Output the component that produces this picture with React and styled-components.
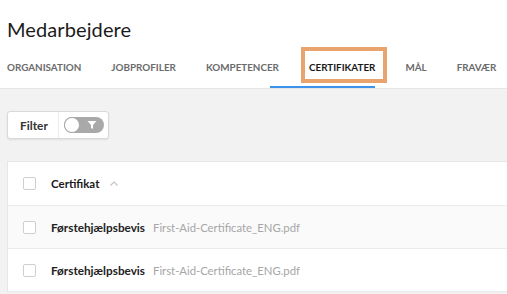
import React from "react";
import styled, { createGlobalStyle } from "styled-components";

const GlobalStyle = createGlobalStyle`
  html, body { margin: 0; padding: 0; background: #f2f2f2; }
  body { font-family: "Lato", "Open Sans", sans-serif; color: #222; }
  * { box-sizing: border-box; }
`;

const Page = styled.div`
  width: 507px;
  height: 294px;
  overflow: hidden;
  background: #f2f2f2;
`;

const Header = styled.header`
  background: #fff;
  border-bottom: 1px solid #e6e6e6;
  padding: 17px 0 0 7px;
`;

const Title = styled.h1`
  margin: 0;
  font-size: 20px;
  font-weight: 400;
  line-height: 24px;
  color: #1b1b1b;
  letter-spacing: 0.1px;
`;

const TabBar = styled.nav`
  display: flex;
  gap: 30px;
  height: 43px;
  margin-top: 4px;
  white-space: nowrap;
`;

const Tab = styled.div`
  position: relative;
  display: flex;
  align-items: center;
  height: 100%;
  padding-top: 1px;
  font-size: 9.85px;
  font-weight: 700;
  color: ${(p) => (p.$active ? "#1a1a1a" : "#6b6b6b")};

  ${(p) =>
    p.$active &&
    `
    &::after {
      content: "";
      position: absolute;
      left: -39px;
      right: 0;
      bottom: 0;
      height: 2px;
      background: #3b93ec;
    }
    &::before {
      content: "";
      position: absolute;
      left: -8px;
      right: -12px;
      top: 2px;
      height: 28px;
      border: 4px solid #e9a36d;
    }
  `}
`;

const Content = styled.main`
  padding: 22px 0 0 7px;
`;

const FilterButton = styled.div`
  display: inline-flex;
  align-items: stretch;
  width: 102px;
  height: 28px;
  background: #fff;
  border: 1px solid #d9d9d9;
  border-radius: 3px;
  box-shadow: 0 1px 2px rgba(0, 0, 0, 0.08);
`;

const FilterLabel = styled.span`
  width: 51px;
  display: flex;
  align-items: center;
  padding-left: 12px;
  font-size: 11.9px;
  font-weight: 700;
  color: #333;
  border-right: 1px solid #ececec;
`;

const ToggleWrap = styled.span`
  flex: 1;
  display: flex;
  align-items: center;
  padding-left: 5px;
`;

const Toggle = styled.span`
  position: relative;
  width: 40px;
  height: 16px;
  border-radius: 8px;
  background: #a9a9a9;
  display: flex;
  align-items: center;
  justify-content: flex-end;
  padding-right: 7px;
`;

const Knob = styled.span`
  position: absolute;
  left: 0;
  top: 0;
  width: 16px;
  height: 16px;
  border-radius: 50%;
  background: #fff;
  border: 1px solid #a9a9a9;
`;

const Card = styled.section`
  margin-top: 22px;
  background: #fff;
  border-top: 1px solid #e6e6e6;
  border-left: 1px solid #e6e6e6;
`;

const Row = styled.div`
  display: flex;
  align-items: center;
  height: ${(p) => (p.$header ? "44px" : "43px")};
  padding-left: 15px;
  background: ${(p) => (p.$shade ? "#fafafa" : "#fff")};
  border-bottom: 1px solid #ebebeb;
  font-size: 11.5px;
  white-space: nowrap;
`;

const Check = styled.span`
  width: 13px;
  height: 13px;
  border: 1px solid #cfcfcf;
  border-radius: 2px;
  background: #fff;
  margin-right: 15px;
  flex: none;
`;

const HeadLabel = styled.span`
  font-weight: 700;
  color: #1a1a1a;
`;

const SortIcon = styled.svg`
  margin-left: 11px;
`;

const Name = styled.span`
  font-size: 11.75px;
  font-weight: 700;
  color: #222;
`;

const File = styled.span`
  margin-left: 8px;
  font-size: 11.3px;
  color: #a6a6a6;
`;

const tabs = ["ORGANISATION", "JOBPROFILER", "KOMPETENCER", "CERTIFIKATER", "MÅL", "FRAVÆR"];
const rows = [
  { name: "Førstehjælpsbevis", file: "First-Aid-Certificate_ENG.pdf" },
  { name: "Førstehjælpsbevis", file: "First-Aid-Certificate_ENG.pdf" },
];

export default function App() {
  return (
    <Page>
      <GlobalStyle />
      <Header>
        <Title>Medarbejdere</Title>
        <TabBar>
          {tabs.map((t) => (
            <Tab key={t} $active={t === "CERTIFIKATER"}>
              {t}
            </Tab>
          ))}
        </TabBar>
      </Header>
      <Content>
        <FilterButton>
          <FilterLabel>Filter</FilterLabel>
          <ToggleWrap>
            <Toggle>
              <Knob />
              <svg width="10" height="10" viewBox="0 0 10 10">
                <path d="M0.5 1 H9.5 L6 5 V9 L4 8 V5 Z" fill="#fff" />
              </svg>
            </Toggle>
          </ToggleWrap>
        </FilterButton>
        <Card>
          <Row $header>
            <Check />
            <HeadLabel>Certifikat</HeadLabel>
            <SortIcon width="8" height="5" viewBox="0 0 8 5">
              <path d="M0.5 4.5 L4 1 L7.5 4.5" stroke="#c4c4c4" strokeWidth="1.2" fill="none" />
            </SortIcon>
          </Row>
          {rows.map((r, i) => (
            <Row key={i} $shade={i === 0}>
              <Check />
              <Name>{r.name}</Name>
              <File>{r.file}</File>
            </Row>
          ))}
        </Card>
      </Content>
    </Page>
  );
}
